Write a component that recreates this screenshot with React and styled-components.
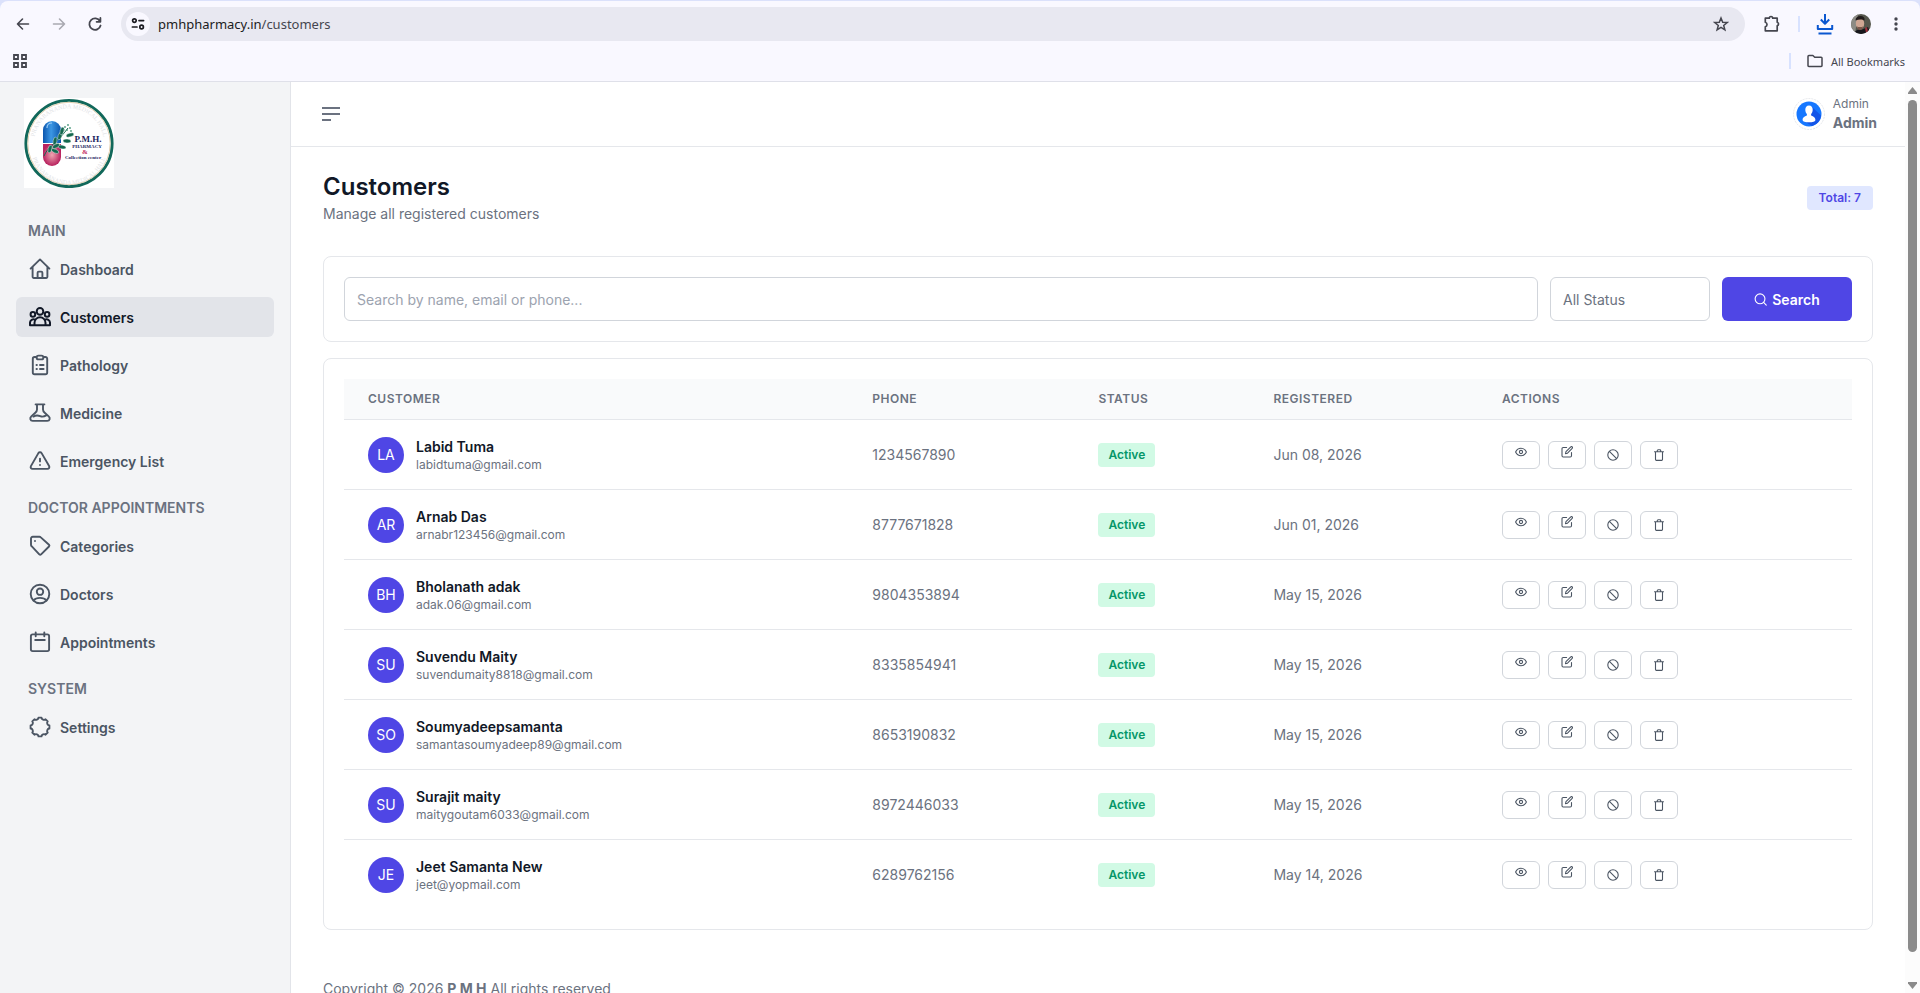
import React, {useState} from 'react'
import styled, {createGlobalStyle, css} from 'styled-components'

const GlobalStyle = createGlobalStyle`
  * {
    box-sizing: border-box;
  }

  body {
    margin: 0;
    background: #fff;
    font-family: Inter, "Liberation Sans", sans-serif;
    font-size: 14px;
    line-height: 21px;
    color: #6b7280;
  }

  button, input, select {
    font: inherit;
    color: inherit;
  }
`

const Window = styled.div`
  display: flex;
  flex-direction: column;
  height: 100vh;
  overflow: hidden;
`

/* browser bars */

const BrowserFrame = styled.header`
  flex: none;
  padding-top: 1px;
  background: #dbe1fb;
  border-bottom: 1px solid #dfe0e9;
  font-family: "Noto Sans", sans-serif;
`

const BrowserBars = styled.div`
  display: flex;
  flex-direction: column;
  gap: 4px;
  height: 80px;
  padding: 6px 0 0 8px;
  background: #f9f8ff;
  border-radius: 8px 8px 0 0;
`

const BarRow = styled.div`
  display: flex;
  align-items: center;
  height: ${props => props.$height}px;
`

const BarButton = styled.button`
  display: flex;
  align-items: center;
  justify-content: center;
  width: ${props => props.$width || 36}px;
  height: 32px;
  padding: 0;
  border: 0;
  background: none;
  color: ${props => props.$color || '#45464f'};
`

const AddressBar = styled.div`
  display: flex;
  flex: 1;
  align-items: center;
  height: 34px;
  margin: 0 9px 0 11px;
  padding: 0 6px 0 5px;
  border-radius: 17px;
  background: #e8e8f1;
`

const SiteInfo = styled.button`
  display: flex;
  align-items: center;
  justify-content: center;
  width: 24px;
  height: 24px;
  padding: 0;
  border: 0;
  border-radius: 50%;
  background: #f9f8ff;
  color: #1b1b21;
`

const Url = styled.div`
  flex: 1;
  margin-left: 8px;
  font-size: 13px;
  color: #45464f;

  span {
    color: #1b1b21;
  }
`

const BarDivider = styled.span`
  width: 2px;
  height: 16px;
  margin-left: ${props => props.$gap || 0}px;
  background: #d8e2ff;
`

const Spacer = styled.div`
  flex: 1;
`

const AllBookmarks = styled.button`
  display: flex;
  align-items: center;
  gap: 8px;
  margin: 0 15px 0 16px;
  padding: 0;
  border: 0;
  background: none;
  font-size: 11px;
  color: #45464f;
`

/* page */

const Page = styled.div`
  display: flex;
  flex: 1;
  min-height: 0;
`

const Sidebar = styled.aside`
  flex: none;
  width: 291px;
  padding: 16px 16px 0;
  background: #f3f4f6;
  border-right: 1px solid #e2e4e9;
`

const Brand = styled.a`
  display: block;
  width: 90px;
  height: 90px;
  margin: 0 0 24px 8px;
`

const NavCaption = styled.h2`
  margin: 0;
  padding: 8px 12px;
  font-size: 14px;
  font-weight: 600;
  line-height: 21px;
  color: #6b7280;
`

const NavLink = styled.a`
  display: flex;
  align-items: center;
  gap: 8px;
  height: 40px;
  margin-bottom: 8px;
  padding: 0 12px;
  border-radius: 6px;
  font-weight: 600;
  text-decoration: none;
  color: #4b5563;

  ${props => props.$active && css`
    background: #e2e4e9;
    color: #111827;
  `}
`

const Main = styled.main`
  flex: 1;
  min-width: 0;
  overflow: hidden;
`

const TopBar = styled.div`
  display: flex;
  align-items: center;
  justify-content: space-between;
  height: 65px;
  padding: 0 28px 0 31px;
  border-bottom: 1px solid #e5e7eb;
`

const MenuButton = styled.button`
  display: flex;
  padding: 0;
  border: 0;
  background: none;
`

const Account = styled.a`
  display: flex;
  align-items: center;
  gap: 8px;
  text-decoration: none;
  color: #6b7280;
`

const AccountText = styled.div`
  display: flex;
  flex-direction: column;
  padding-bottom: 2px;
  font-size: 12px;
  line-height: 19px;

  strong {
    font-size: 14px;
    font-weight: 700;
  }
`

const Content = styled.div`
  padding: 24px 32px 0;
`

const PageHead = styled.div`
  display: flex;
  align-items: center;
  justify-content: space-between;
  margin-bottom: 32px;
`

const Title = styled.h1`
  margin: 0;
  font-size: 24px;
  font-weight: 600;
  line-height: 32px;
  color: #111827;
`

const Subtitle = styled.p`
  margin: 0;
`

const Badge = styled.span`
  display: inline-block;
  padding: 0 ${props => props.$tone === 'total' ? 12 : 10}px;
  border-radius: 4px;
  font-size: 12px;
  font-weight: 600;
  line-height: 24px;
  color: ${props => props.$tone === 'total' ? '#4f46e5' : '#059669'};
  background: ${props => props.$tone === 'total' ? '#e0e7ff' : '#d1fae5'};
`

const Card = styled.section`
  margin-bottom: 16px;
  padding: 20px;
  border: 1px solid #e5e7eb;
  border-radius: 8px;
`

const FilterForm = styled.form`
  display: flex;
  gap: 12px;
`

const fieldBox = css`
  height: 44px;
  padding: 0 12px;
  border: 1px solid #d1d5db;
  border-radius: 6px;
  background: #fff;
`

const SearchInput = styled.input`
  ${fieldBox};
  flex: 1;
  min-width: 0;

  &::placeholder {
    color: #9ca3af;
  }
`

const StatusSelect = styled.select`
  ${fieldBox};
  width: 160px;
  appearance: none;
`

const SearchButton = styled.button`
  display: flex;
  align-items: center;
  justify-content: center;
  gap: 5px;
  width: 130px;
  height: 44px;
  border: 0;
  border-radius: 6px;
  background: #4f46e5;
  font-weight: 600;
  color: #fff;
`

const Table = styled.table`
  width: 100%;
  border-collapse: separate;
  border-spacing: 0;
  text-align: left;
`

const Th = styled.th`
  height: 41px;
  padding: 0 24px 2px;
  border-bottom: 1px solid #e5e7eb;
  background: #f9fafb;
  font-size: 12px;
  font-weight: 600;
  letter-spacing: 0.5px;
  text-transform: uppercase;
`

const Td = styled.td`
  height: 70px;
  padding: 0 24px;
  border-bottom: 1px solid #e5e7eb;

  tr:last-child & {
    height: 69px;
    border-bottom: 0;
  }
`

const Person = styled.div`
  display: flex;
  align-items: center;
  gap: 12px;
`

const Initials = styled.div`
  display: flex;
  align-items: center;
  justify-content: center;
  width: 36px;
  height: 36px;
  border-radius: 50%;
  background: #4f46e5;
  color: #fff;
`

const PersonText = styled.div`
  padding-top: 2px;
`

const PersonName = styled.div`
  font-weight: 600;
  line-height: 18px;
  color: #111827;
`

const PersonMail = styled.div`
  font-size: 12px;
  line-height: 18px;
`

const Actions = styled.div`
  display: flex;
  gap: 8px;
`

const ActionButton = styled.button`
  display: flex;
  align-items: center;
  justify-content: center;
  width: 38px;
  height: 28px;
  padding: 0 0 ${props => props.$raised ? 6 : 0}px;
  border: 1px solid #d1d5db;
  border-radius: 6px;
  background: #fff;
  color: #4b5563;
`

const Footer = styled.footer`
  padding: 32px 0;
`

const Scrollbar = styled.div`
  display: flex;
  flex: none;
  flex-direction: column;
  align-items: center;
  width: 15px;
  padding: 5px 0 4px;
  background: #fcfcfc;
`

const ScrollThumb = styled.div`
  flex: 1;
  width: 9px;
  margin: 6px 0 30px;
  border-radius: 5px;
  background: #8b8b8b;
`

/* icons */

const Icon = ({size = 20, box = 20, stroke = 1.9, children}) => (
	<svg width={size} height={size} viewBox={`0 0 ${box} ${box}`} fill="none" stroke="currentColor"
		strokeWidth={stroke} strokeLinecap="round" strokeLinejoin="round" aria-hidden="true">
		{children}
	</svg>
)

const icons = {
	home: <Icon size={24} box={24}>
		<path d="M2.6 11.6 12 2.4l9.4 9.2M4.6 10v9.8a1.2 1.2 0 0 0 1.2 1.2h12.4a1.2 1.2 0 0 0 1.2-1.2V10"/>
		<path d="M9.6 21v-5.2a1.2 1.2 0 0 1 1.2-1.2h2.4a1.2 1.2 0 0 1 1.2 1.2V21"/>
	</Icon>,
	people: <Icon size={24} box={24} stroke={2}>
		<circle cx="12" cy="6.4" r="3.3"/>
		<circle cx="4.9" cy="9.4" r="2.3"/>
		<circle cx="19.1" cy="9.4" r="2.3"/>
		<path d="M6.5 20.2v-2.4a5.5 5.5 0 0 1 11 0v2.4zM6.5 20.2H2v-2.6a3.4 3.4 0 0 1 4.9-2.9M17.5 20.2H22v-2.6a3.4 3.4 0 0 0-4.9-2.9"/>
	</Icon>,
	clipboard: <Icon size={24} box={24}>
		<path d="M8.4 4H6.6A1.8 1.8 0 0 0 4.8 5.8v13.6a1.8 1.8 0 0 0 1.8 1.8h10.8a1.8 1.8 0 0 0 1.8-1.8V5.8A1.8 1.8 0 0 0 17.4 4h-1.8"/>
		<rect x="8.6" y="2.6" width="6.8" height="3.8" rx="1.9"/>
		<path d="M8.5 12h.4M12 12h3.6M8.5 16h.4M12 16h3.6"/>
	</Icon>,
	flask: <Icon size={24} box={24}>
		<path d="M7.6 3.4h8.8M9 3.4v5.2c0 1.3-.6 2.3-1.7 3.2l-4 3.6c-1.8 1.7-1.1 4.5 1.4 4.5h14.6c2.5 0 3.2-2.8 1.4-4.5l-4-3.6C15.6 10.9 15 9.9 15 8.6V3.4"/>
		<path d="M5.4 15.6c2.8-1.6 4.8-1.2 6.8-.4s4 .5 6-.8"/>
	</Icon>,
	warning: <Icon size={24} box={24}>
		<path d="M10.4 4.1 2.9 17.1a1.85 1.85 0 0 0 1.6 2.8h15a1.85 1.85 0 0 0 1.6-2.8L13.6 4.1a1.85 1.85 0 0 0-3.2 0zM12 9.6v2.8M12 16h0"/>
	</Icon>,
	tag: <Icon size={24} box={24}>
		<path d="M3 4.8v6a2 2 0 0 0 .6 1.4l7.7 8.2a1.3 1.3 0 0 0 1.8 0l7.9-7.9a1.3 1.3 0 0 0 0-1.8l-8.2-7.3a2 2 0 0 0-1.4-.6H4.8A1.8 1.8 0 0 0 3 4.8zM7 7h0"/>
	</Icon>,
	userCircle: <Icon size={24} box={24}>
		<circle cx="12" cy="12" r="9.3"/>
		<circle cx="12" cy="9.7" r="3.2"/>
		<path d="M5.6 18.4c1.3-1.6 3.6-2.5 6.4-2.5s5.1.9 6.4 2.5"/>
	</Icon>,
	calendar: <Icon size={24} box={24}>
		<rect x="2.9" y="4.4" width="18.2" height="16.7" rx="1.8"/>
		<path d="M7.7 2.4v3.8M16.3 2.4v3.8M7.2 10h9.6"/>
	</Icon>,
	gear: <Icon size={24} box={24}>
		<path d="M10.5 2.6H13.5A2.5 2.5 0 0 0 17.6 4.3L19.7 6.4A2.5 2.5 0 0 0 21.4 10.5V13.5A2.5 2.5 0 0 0 19.7 17.6L17.6 19.7A2.5 2.5 0 0 0 13.5 21.4H10.5A2.5 2.5 0 0 0 6.4 19.7L4.3 17.6A2.5 2.5 0 0 0 2.6 13.5V10.5A2.5 2.5 0 0 0 4.3 6.4L6.4 4.3A2.5 2.5 0 0 0 10.5 2.6z"/>
	</Icon>,
	search: <Icon size={13} box={14} stroke={1.2}>
		<circle cx="6.5" cy="6.3" r="5.3"/>
		<path d="m10.4 10.2 2.8 2.8"/>
	</Icon>,
	eye: <Icon size={12} box={12} stroke={1.1}>
		<path d="M.6 6C1.7 3.6 3.7 2.2 6 2.2S10.3 3.6 11.4 6C10.3 8.4 8.3 9.8 6 9.8S1.7 8.4.6 6z"/>
		<circle cx="6" cy="6" r="1.6"/>
	</Icon>,
	edit: <Icon size={12} box={12} stroke={1.1}>
		<path d="M5.6 1.5H2.2A1.2 1.2 0 0 0 1 2.7v7.1A1.2 1.2 0 0 0 2.2 11h7.1a1.2 1.2 0 0 0 1.2-1.2V6.6"/>
		<path d="M4.5 7.7 5 5.7 9.8.9a1 1 0 0 1 1.4 0 1 1 0 0 1 0 1.4L6.5 7.2z"/>
	</Icon>,
	ban: <Icon size={12} box={12} stroke={1.1}>
		<circle cx="6" cy="6" r="5.2"/>
		<path d="m2.4 2.4 7.2 7.2"/>
	</Icon>,
	trash: <Icon size={12} box={12} stroke={1.1}>
		<path d="M1.5 2.7h9M2.5 2.7v7.5a1.2 1.2 0 0 0 1.2 1.2h4.6a1.2 1.2 0 0 0 1.2-1.2V2.7M4.3 2.5V1.6a.8.8 0 0 1 .8-.8h1.8a.8.8 0 0 1 .8.8v.9"/>
	</Icon>
}

const leaves = [
	[26, 51, -75], [31, 53, 25], [31, 43, -80], [38, 49, 10], [36, 38, -70], [43, 43, 5], [38, 33, -75], [46, 37, -15], [32, 48, -30]
]

const Logo = () => (
	<svg width="90" height="90" viewBox="0 0 90 90" role="img" aria-label="P.M.H. Pharmacy">
		<defs>
			<linearGradient id="blue" x1="0" x2="1">
				<stop offset="0" stopColor="#0b55ad"/>
				<stop offset="0.45" stopColor="#3c97e4"/>
				<stop offset="1" stopColor="#0b55ad"/>
			</linearGradient>
			<radialGradient id="pink">
				<stop offset="0" stopColor="#f0a5b0"/>
				<stop offset="1" stopColor="#b8225f"/>
			</radialGradient>
			<path id="arcTop" d="M12 57A35 35 0 1 1 78 57"/>
			<path id="arcBottom" d="M6.5 48A38.5 38.5 0 0 0 83.5 48"/>
		</defs>
		<rect width="90" height="90" fill="#fff"/>
		<circle cx="45" cy="45.5" r="43.2" fill="none" stroke="#11685a" strokeWidth="2.8"/>
		<circle cx="45" cy="45.5" r="41.2" fill="none" stroke="#d9c39a" strokeWidth="0.8"/>
		<g fontFamily="Liberation Serif, serif" fontSize="6" fill="#dfe3e6" textAnchor="middle">
			<text><textPath href="#arcTop" startOffset="50%">PRANABANANDA MEDICAL HALL</textPath></text>
			<text><textPath href="#arcBottom" startOffset="50%">PRANABANANDA MEDICAL HALL</textPath></text>
		</g>
		<path d="M19 45V32a9 9 0 0 1 18 0v13z" fill="url(#blue)"/>
		<path d="M19 46h18v13a9 9 0 0 1-18 0z" fill="url(#pink)"/>
		<path d="M23 30c0-3 2-5 5-5" fill="none" stroke="#9accf6" strokeWidth="1.2"/>
		<path d="M20 58C24 48 34 44 44 30" fill="none" stroke="#14684f" strokeWidth="1"/>
		{leaves.map(([x, y, turn]) => (
			<ellipse key={`${x}-${y}`} cx={x} cy={y} rx="4" ry="1.9" transform={`rotate(${turn} ${x} ${y})`}
				fill="#14684f" stroke="#fff" strokeWidth="0.4"/>
		))}
		<g fill="#4f9a7f">
			<circle cx="41" cy="29" r="0.9"/>
			<circle cx="44" cy="27" r="0.9"/>
			<circle cx="46" cy="30" r="0.9"/>
			<circle cx="43" cy="32" r="0.9"/>
			<circle cx="47" cy="33" r="0.9"/>
			<circle cx="40" cy="32" r="0.7"/>
		</g>
		<g fontFamily="Liberation Serif, serif" fontWeight="700" fill="#1c2560" textAnchor="middle">
			<text x="64" y="44" fontSize="9">P.M.H.</text>
			<text x="63" y="50" fontSize="5">PHARMACY</text>
			<text x="61" y="56" fontSize="7" fill="#c2265d">&amp;</text>
			<text x="59" y="61" fontSize="5">Collection center</text>
		</g>
	</svg>
)

const AccountPicture = () => (
	<svg width="32" height="32" viewBox="0 0 32 32" aria-hidden="true">
		<circle cx="16" cy="16" r="15.5" fill="#fff" stroke="#e5e7eb" strokeDasharray="2 1"/>
		<circle cx="16" cy="16" r="12.5" fill="#1677ff"/>
		<path d="M19 9l9 8.5a12.5 12.5 0 0 1-9 10.5l-8-5z" fill="#1455e8"/>
		<path d="M16 7.5c2.4 0 3.7 1.7 3.7 4.2 0 1.9-.7 3.4-1.6 4.3v1.3c.9 1.2 4.3 1.3 4.3 4.7 0 1.5-2.8 2.3-6.4 2.3s-6.4-.8-6.4-2.3c0-3.4 3.4-3.5 4.3-4.7V16c-.9-.9-1.6-2.4-1.6-4.3 0-2.5 1.3-4.2 3.7-4.2z" fill="#fff"/>
	</svg>
)

const ProfilePicture = () => (
	<svg width="20" height="20" viewBox="0 0 20 20" aria-hidden="true">
		<clipPath id="round"><circle cx="10" cy="10" r="10"/></clipPath>
		<g clipPath="url(#round)">
			<rect width="20" height="20" fill="#55564c"/>
			<path d="M0 0h7l-3 20H0z" fill="#8c8b84"/>
			<path d="M3 20c1-4 4-5 7-4l7-3 3 7z" fill="#17171c"/>
			<ellipse cx="9" cy="9.5" rx="4.2" ry="5.5" fill="#cfa693"/>
			<path d="M4.5 6.500c0-3 2-4.500 5-4.500s4.500 1.500 4 4.500c-2-1.500-6-1.500-9 0z" fill="#221c1b"/>
			<path d="M6 12.500c1.500.8 4.500.8 6 0-.3 2.500-1.500 3.500-3 3.500s-2.700-1-3-3.500z" fill="#7a574b"/>
			<path d="M14 14l2-1 1 5-2 1z" fill="#9d2f3a"/>
		</g>
	</svg>
)

const Browser = () => (
	<BrowserFrame>
		<BrowserBars>
			<BarRow $height={34}>
				<BarButton $width={30} aria-label="Back">
					<Icon size={16} box={16} stroke={1.6}><path d="M13.5 8h-11M7.5 3 2.5 8l5 5"/></Icon>
				</BarButton>
				<BarButton $width={42} $color="#a9a9b1" aria-label="Forward">
					<Icon size={16} box={16} stroke={1.6}><path d="M2.5 8h11M8.5 3l5 5-5 5"/></Icon>
				</BarButton>
				<BarButton $width={30} aria-label="Reload">
					<Icon size={16} box={16} stroke={1.8}>
						<path d="M13 5.2A5.7 5.7 0 1 0 13.6 9.5M13.4 2v3.8H9.6"/>
					</Icon>
				</BarButton>
				<AddressBar>
					<SiteInfo aria-label="View site information">
						<Icon size={14} box={14} stroke={1.7}>
							<circle cx="3.4" cy="3.6" r="1.8"/>
							<path d="M8 3.6h4.6M1.4 10h4.6"/>
							<circle cx="10.6" cy="10" r="1.8"/>
						</Icon>
					</SiteInfo>
					<Url><span>pmhpharmacy.in</span>/customers</Url>
					<BarButton aria-label="Bookmark this tab">
						<Icon size={16} box={16} stroke={1.5}>
							<path strokeLinejoin="miter" d="m8 2 1.7 4.2 4.5.3-3.5 2.9 1.2 4.4L8 11.4l-3.9 2.4 1.2-4.4-3.5-2.9 4.5-.3z"/>
						</Icon>
					</BarButton>
				</AddressBar>
				<BarButton aria-label="Extensions">
					<Icon size={18} box={18} stroke={1.7}>
						<path d="M2.3 3.2h4a1.7 1.7 0 0 1 3.4 0h4.5v4a1.9 1.9 0 0 1 0 3.6v5H2.3v-4a2.4 2.4 0 0 0 0-4.6z"/>
					</Icon>
				</BarButton>
				<BarDivider $gap={8}/>
				<BarButton $width={50} $color="#0b57d0" aria-label="Downloads">
					<Icon size={22} box={22} stroke={2}>
						<path strokeLinecap="butt" d="M11 1v9M6.8 6.5 11 10.7l4.2-4.2M3.8 12v4h14.4v-4M4.5 20.5h13"/>
					</Icon>
				</BarButton>
				<BarButton $width={22} aria-label="Profile"><ProfilePicture/></BarButton>
				<BarButton $width={48} aria-label="Browser menu">
					<svg width="4" height="14" fill="currentColor" aria-hidden="true">
						<circle cx="2" cy="2" r="1.7"/>
						<circle cx="2" cy="7" r="1.7"/>
						<circle cx="2" cy="12" r="1.7"/>
					</svg>
				</BarButton>
			</BarRow>
			<BarRow $height={32}>
				<BarButton $width={24} aria-label="Apps">
					<svg width="14" height="14" fill="none" stroke="currentColor" strokeWidth="1.8" aria-hidden="true">
						<path d="M1 1h4v4H1zM9 1h4v4H9zM1 9h4v4H1zM9 9h4v4H9z"/>
					</svg>
				</BarButton>
				<Spacer/>
				<BarDivider/>
				<AllBookmarks>
					<Icon size={16} box={16} stroke={1.5}>
						<path d="M1 3.4A.9.9 0 0 1 1.9 2.5h4l1.8 1.7h6.4a.9.9 0 0 1 .9.9v7.5a.9.9 0 0 1-.9.9H1.9a.9.9 0 0 1-.9-.9z"/>
					</Icon>
					All Bookmarks
				</AllBookmarks>
			</BarRow>
		</BrowserBars>
	</BrowserFrame>
)

const menu = [
	{caption: 'MAIN', links: [['Dashboard', 'home'], ['Customers', 'people'], ['Pathology', 'clipboard'], ['Medicine', 'flask'], ['Emergency List', 'warning']]},
	{caption: 'DOCTOR APPOINTMENTS', links: [['Categories', 'tag'], ['Doctors', 'userCircle'], ['Appointments', 'calendar']]},
	{caption: 'SYSTEM', links: [['Settings', 'gear']]}
]

const customers = [
	['Labid Tuma', 'labidtuma@gmail.com', '1234567890', 'Jun 08, 2026'],
	['Arnab Das', 'arnabr123456@gmail.com', '8777671828', 'Jun 01, 2026'],
	['Bholanath adak', 'adak.06@gmail.com', '9804353894', 'May 15, 2026'],
	['Suvendu Maity', 'suvendumaity8818@gmail.com', '8335854941', 'May 15, 2026'],
	['Soumyadeepsamanta', 'samantasoumyadeep89@gmail.com', '8653190832', 'May 15, 2026'],
	['Surajit maity', 'maitygoutam6033@gmail.com', '8972446033', 'May 15, 2026'],
	['Jeet Samanta New', 'jeet@yopmail.com', '6289762156', 'May 14, 2026']
]

const CustomerRow = ({customer: [name, mail, phone, registered]}) => (
	<tr>
		<Td>
			<Person>
				<Initials>{name.slice(0, 2).toUpperCase()}</Initials>
				<PersonText>
					<PersonName>{name}</PersonName>
					<PersonMail>{mail}</PersonMail>
				</PersonText>
			</Person>
		</Td>
		<Td>{phone}</Td>
		<Td><Badge>Active</Badge></Td>
		<Td>{registered}</Td>
		<Td>
			<Actions>
				<ActionButton $raised aria-label={`View ${name}`}>{icons.eye}</ActionButton>
				<ActionButton $raised aria-label={`Edit ${name}`}>{icons.edit}</ActionButton>
				<ActionButton aria-label={`Block ${name}`}>{icons.ban}</ActionButton>
				<ActionButton aria-label={`Delete ${name}`}>{icons.trash}</ActionButton>
			</Actions>
		</Td>
	</tr>
)

const App = () => {

	const [query, setQuery] = useState('')
	const [status, setStatus] = useState('')

	return (
		<Window>
			<GlobalStyle/>
			<Browser/>
			<Page>
				<Sidebar>
					<Brand href="#"><Logo/></Brand>
					<nav>
						{menu.map(({caption, links}) => (
							<React.Fragment key={caption}>
								<NavCaption>{caption}</NavCaption>
								{links.map(([label, icon]) => (
									<NavLink key={label} href="#" $active={label === 'Customers'}>
										{icons[icon]}
										{label}
									</NavLink>
								))}
							</React.Fragment>
						))}
					</nav>
				</Sidebar>

				<Main>
					<TopBar>
						<MenuButton aria-label="Toggle sidebar">
							<svg width="18" height="14" fill="#6b7280" aria-hidden="true">
								<path d="M0 0h18v2H0zM0 6h18v2H0zM0 12h9v2H0z"/>
							</svg>
						</MenuButton>
						<Account href="#">
							<AccountPicture/>
							<AccountText>
								<span>Admin</span>
								<strong>Admin</strong>
							</AccountText>
						</Account>
					</TopBar>

					<Content>
						<PageHead>
							<div>
								<Title>Customers</Title>
								<Subtitle>Manage all registered customers</Subtitle>
							</div>
							<Badge $tone="total">Total: 7</Badge>
						</PageHead>

						<Card>
							<FilterForm onSubmit={e => e.preventDefault()}>
								<SearchInput
									aria-label="Search customers"
									placeholder="Search by name, email or phone..."
									value={query}
									onChange={e => setQuery(e.target.value)}
								/>
								<StatusSelect aria-label="Status" value={status} onChange={e => setStatus(e.target.value)}>
									<option value="">All Status</option>
									<option value="active">Active</option>
									<option value="blocked">Blocked</option>
								</StatusSelect>
								<SearchButton type="submit">{icons.search}Search</SearchButton>
							</FilterForm>
						</Card>

						<Card>
							<Table>
								<thead>
									<tr>
										<Th>Customer</Th>
										<Th>Phone</Th>
										<Th>Status</Th>
										<Th>Registered</Th>
										<Th>Actions</Th>
									</tr>
								</thead>
								<tbody>
									{customers.map(customer => <CustomerRow key={customer[1]} customer={customer}/>)}
								</tbody>
							</Table>
						</Card>

						<Footer>Copyright © 2026 <strong>P M H</strong> All rights reserved</Footer>
					</Content>
				</Main>

				<Scrollbar aria-hidden="true">
					<svg width="9" height="7" fill="#8b8b8b"><path d="M4.5 0 9 5.5V7H0V5.5z"/></svg>
					<ScrollThumb/>
					<svg width="9" height="7" fill="#8b8b8b"><path d="M4.5 7 9 1.5V0H0v1.5z"/></svg>
				</Scrollbar>
			</Page>
		</Window>
	)
}

export default App
